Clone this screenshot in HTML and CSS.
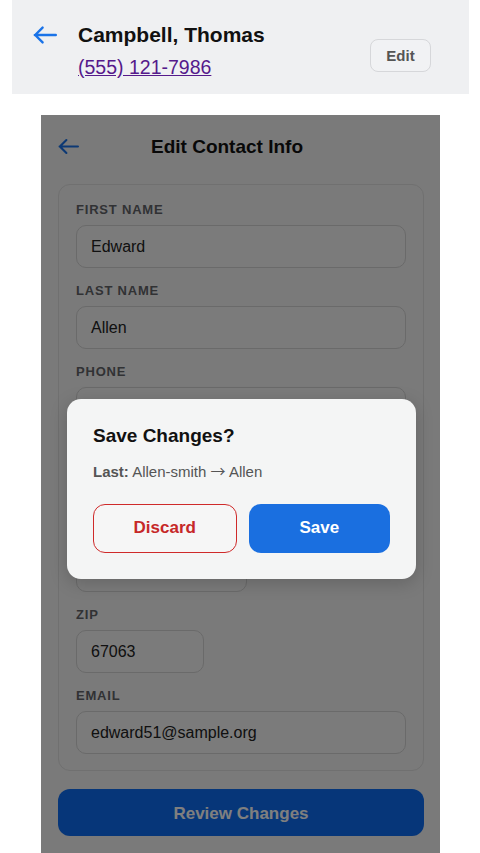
FILE: index.html
```html
<!DOCTYPE html>
<html lang="en">
<head>
<meta charset="utf-8">
<title>Edit Contact Info</title>
<link rel="stylesheet" href="styles.css">
</head>
<body>
<header class="contact-header">
  <span class="back-icon">
    <svg width="24" height="24" viewBox="2 2 20 20" fill="none" stroke="#1a73e8" stroke-width="2" stroke-linecap="round" stroke-linejoin="round"><path d="M21 12H3.5M10 5.8L3.8 12l6.2 6.2"/></svg>
  </span>
  <div class="contact-info">
    <div class="contact-name">Campbell, Thomas</div>
    <a class="contact-phone" href="#">(555) 121-7986</a>
  </div>
  <button class="edit-btn">Edit</button>
</header>

<section class="frame">
  <div class="frame-bar">
    <svg class="frame-back" width="21" height="21" viewBox="2 2 20 20" fill="none" stroke="#1a73e8" stroke-width="2" stroke-linecap="round" stroke-linejoin="round"><path d="M21 12H3.5M10 5.8L3.8 12l6.2 6.2"/></svg>
    <h1 class="frame-title">Edit Contact Info</h1>
  </div>

  <form class="card">
    <div class="field">
      <label class="field-label">First Name</label>
      <div class="input">Edward</div>
    </div>
    <div class="field">
      <label class="field-label">Last Name</label>
      <div class="input">Allen</div>
    </div>
    <div class="field">
      <label class="field-label">Phone</label>
      <div class="input"></div>
    </div>
    <div class="field">
      <div class="field-label field-hidden"></div>
      <div class="input"></div>
    </div>
    <div class="field">
      <div class="field-label field-hidden"></div>
      <div class="input input-city"></div>
    </div>
    <div class="field">
      <label class="field-label">Zip</label>
      <div class="input input-zip">67063</div>
    </div>
    <div class="field">
      <label class="field-label">Email</label>
      <div class="input">edward51@sample.org</div>
    </div>
  </form>

  <button class="review-btn">Review Changes</button>

  <div class="overlay">
    <div class="modal">
      <h2 class="modal-title">Save Changes?</h2>
      <p class="modal-text"><b>Last:</b> Allen-smith <span class="arrow">→</span> Allen</p>
      <div class="modal-actions">
        <button class="btn btn-discard">Discard</button>
        <button class="btn btn-save">Save</button>
      </div>
    </div>
  </div>
</section>
</body>
</html>
```

FILE: styles.css
```css
* { box-sizing: border-box; }

html, body {
  margin: 0;
  padding: 0;
  background: #ffffff;
  font-family: "Liberation Sans", Arial, Helvetica, sans-serif;
  color: #111;
}

button { font-family: inherit; }

.contact-header {
  display: flex;
  align-items: flex-start;
  margin-left: 12px;
  width: 457px;
  height: 94px;
  padding: 22px 38px 0 21px;
  background: #eff0f2;
}

.back-icon {
  display: flex;
  align-items: center;
  height: 25px;
  margin-right: 21px;
}

.contact-info {
  flex: 1;
  display: flex;
  flex-direction: column;
  gap: 9px;
}

.contact-name {
  font-size: 21px;
  line-height: 25px;
  font-weight: 700;
  color: #111;
}

.contact-phone {
  font-size: 19.5px;
  line-height: 23px;
  color: #551a8b;
  text-decoration: underline;
  align-self: flex-start;
}

.edit-btn {
  margin-top: 17px;
  width: 61px;
  height: 33px;
  border: 1.5px solid #d6d7da;
  border-radius: 8px;
  background: #f1f2f4;
  color: #555;
  font-size: 15px;
  font-weight: 700;
  padding: 0;
}

.frame {
  position: relative;
  margin: 21px 0 0 41px;
  width: 399px;
  min-height: 738px;
  padding: 0 16px 18px 17px;
  background: #f4f4f4;
  overflow: hidden;
}

.frame-bar {
  display: flex;
  align-items: center;
  height: 63px;
}

.frame-back { flex: none; }

.frame-title {
  flex: 1;
  margin: 0 49px 0 0;
  text-align: center;
  font-size: 19px;
  font-weight: 700;
  color: #111;
}

.card {
  margin: 6px 0 0 0;
  padding: 17px 17px 16px 17px;
  border: 1px solid #e0e0e0;
  border-radius: 12px;
  background: #f5f5f5;
}

.field { margin-bottom: 15px; }
.field:last-child { margin-bottom: 0; }

.field-label {
  display: block;
  font-size: 13px;
  line-height: 16px;
  font-weight: 700;
  letter-spacing: 0.8px;
  text-transform: uppercase;
  color: #626469;
  margin-bottom: 7px;
}

.field-hidden { height: 16px; }

.input {
  height: 43px;
  display: flex;
  align-items: center;
  padding: 0 14px;
  border: 1px solid #d4d4d4;
  border-radius: 10px;
  background: #f6f6f6;
  font-size: 16px;
  color: #222;
}

.input-city { width: 171px; }
.input-zip { width: 128px; }

.review-btn {
  display: block;
  width: 100%;
  height: 47px;
  margin-top: 18px;
  padding-top: 3px;
  border: none;
  border-radius: 12px;
  background: #0d6cf2;
  color: #ffffff;
  font-size: 17px;
  font-weight: 700;
}

.overlay {
  position: absolute;
  inset: 0;
  background: rgba(0, 0, 0, 0.5);
  display: flex;
  align-items: center;
  justify-content: center;
  padding: 8px 0 0 2px;
}

.modal {
  width: 349px;
  padding: 26px;
  border-radius: 14px;
  background: #f4f5f5;
  box-shadow: 0 4px 18px rgba(0, 0, 0, 0.18);
}

.modal-title {
  margin: 0;
  font-size: 19px;
  line-height: 22px;
  font-weight: 700;
  color: #111;
}

.modal-text {
  margin: 15px 0 0 0;
  font-size: 15px;
  line-height: 17px;
  color: #555;
}

.modal-text b { font-weight: 700; color: #555; }

.arrow {
  font-family: "Noto Sans CJK SC", sans-serif;
  font-size: 15px;
  line-height: 17px;
}

.modal-actions {
  display: flex;
  gap: 12px;
  margin-top: 24px;
}

.btn {
  flex: 1;
  height: 49px;
  border-radius: 12px;
  font-size: 17px;
  font-weight: 700;
  padding: 0;
}

.btn-discard {
  border: 1.8px solid #cf2a2a;
  background: #f6f6f6;
  color: #c62828;
}

.btn-save {
  border: none;
  background: #1a6fe0;
  color: #ffffff;
}
```
